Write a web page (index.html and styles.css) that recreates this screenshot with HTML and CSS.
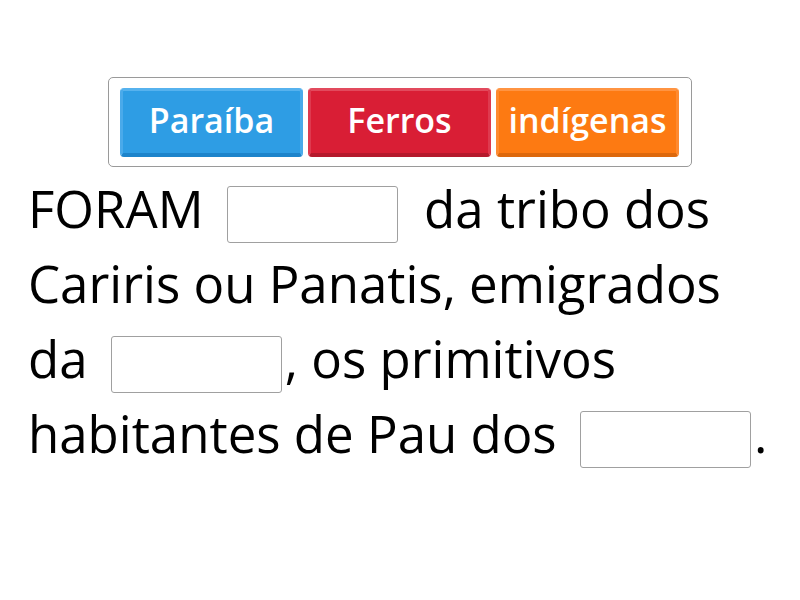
FILE: index.html
```html
<!DOCTYPE html>
<html lang="pt">
<head>
<meta charset="utf-8">
<title>Complete a frase</title>
<link rel="stylesheet" href="styles.css">
</head>
<body>
<div class="page">
  <div class="bank">
    <div class="tile tile-blue">Paraíba</div>
    <div class="tile tile-red">Ferros</div>
    <div class="tile tile-orange">indígenas</div>
  </div>
  <p class="sentence"><span class="word">FORAM</span> <span class="blank blank-wide"></span> <span class="word">da tribo dos</span> <span class="word">Cariris ou Panatis, emigrados</span> <span class="word">da</span> <span class="blank"></span><span class="word">, os primitivos</span> <span class="word">habitantes de Pau dos</span> <span class="blank"></span><span class="word">.</span></p>
</div>
</body>
</html>
```

FILE: styles.css
```css
html, body {
  margin: 0;
  padding: 0;
  background: #ffffff;
}

body {
  font-family: "Open Sans", "Noto Sans", sans-serif;
  color: #000000;
}

.page {
  width: 800px;
  height: 600px;
  padding-top: 77px;
  box-sizing: border-box;
}

.bank {
  width: 584px;
  height: 90px;
  margin: 0 auto;
  box-sizing: border-box;
  border: 1px solid #9a9a9a;
  border-radius: 5px;
  padding: 10px 12px 0 11px;
  display: flex;
  gap: 5px;
}

.tile {
  width: 183px;
  height: 69px;
  box-sizing: border-box;
  border-radius: 4px;
  border: 3px solid;
  border-bottom-width: 4px;
  color: #ffffff;
  font-weight: 600;
  font-size: 34px;
  display: flex;
  align-items: center;
  justify-content: center;
  padding-bottom: 5px;
}

.tile-blue {
  background: #2e9de4;
  border-color: #56b2ee #4aaaea #1d84cb #4aaaea;
}

.tile-red {
  background: #d91e35;
  border-color: #e24a5d #de3a4f #b5192c #de3a4f;
}

.tile-orange {
  background: #fd7a12;
  border-color: #ff9442 #fe8a30 #dd680c #fe8a30;
}

.sentence {
  margin: 4px 0 0 0;
  padding: 0 28px;
  font-size: 51px;
  line-height: 75px;
}

.word {
  white-space: nowrap;
}

.blank {
  display: inline-block;
  width: 171px;
  height: 57px;
  box-sizing: border-box;
  border: 1px solid #a0a0a0;
  border-radius: 3px;
  vertical-align: middle;
  margin: 0 3px 0 10px;
}

.blank-wide {
  margin-right: 13px;
}
```
